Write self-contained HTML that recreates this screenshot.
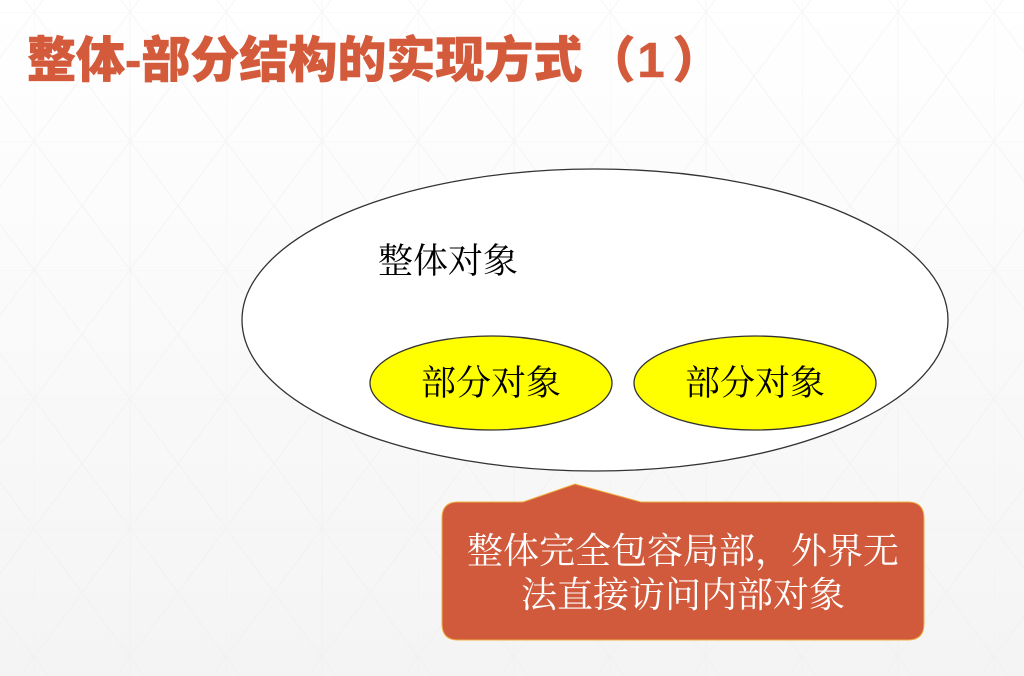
<!DOCTYPE html>
<html><head><meta charset="utf-8"><style>
html,body{margin:0;padding:0;width:1024px;height:676px;overflow:hidden;background:#fff;}
</style></head><body>
<svg width="1024" height="676" viewBox="0 0 1024 676" xmlns="http://www.w3.org/2000/svg">
<defs>
<linearGradient id="bg" x1="0" y1="0" x2="0" y2="1"><stop offset="0" stop-color="#ffffff"/><stop offset="1" stop-color="#f4f4f4"/></linearGradient>
<pattern id="grid" width="192" height="129" patternUnits="userSpaceOnUse" x="34" y="12">
<path d="M0 0H192M0 0V129M96 0V129M0 0L96 129M96 0L0 129M96 0L192 129M192 0L96 129" stroke="#ececec" stroke-width="1" fill="none"/>
</pattern>
</defs>
<rect width="1024" height="676" fill="url(#bg)"/>
<rect width="1024" height="676" fill="url(#grid)" opacity="0.5"/>
<text x="27" y="77" font-family="'Liberation Sans','Noto Sans CJK SC',sans-serif" font-weight="900" font-size="49" fill="#D35B3C" stroke="#D35B3C" stroke-width="0.6">整体-部分结构的实现方式<tspan dx="4">（</tspan><tspan dx="2">1</tspan><tspan dx="8">）</tspan></text>
<ellipse cx="595" cy="320" rx="353" ry="151" fill="#fff" stroke="#333" stroke-width="1.3"/>
<text x="378" y="273" font-family="'Noto Serif CJK SC',serif" font-size="35" fill="#000">整体对象</text>
<ellipse cx="491" cy="383" rx="121" ry="47" fill="#FFFF00" stroke="#333" stroke-width="1.3"/>
<ellipse cx="755" cy="383" rx="121" ry="47" fill="#FFFF00" stroke="#333" stroke-width="1.3"/>
<text x="491" y="395" text-anchor="middle" font-family="'Noto Serif CJK SC',serif" font-size="35" fill="#000">部分对象</text>
<text x="755" y="395" text-anchor="middle" font-family="'Noto Serif CJK SC',serif" font-size="35" fill="#000">部分对象</text>
<path d="M458 502H523L575 484L641 502H908Q924 502 924 518V624Q924 640 908 640H458Q442 640 442 624V518Q442 502 458 502Z" fill="#D15A3D" stroke="#F0B040" stroke-width="1"/>
<text x="683" y="563" text-anchor="middle" font-family="'Noto Serif CJK SC',serif" font-size="36" fill="#fff">整体完全包容局部，外界无</text>
<text x="683" y="607" text-anchor="middle" font-family="'Noto Serif CJK SC',serif" font-size="36" fill="#fff">法直接访问内部对象</text>
</svg>
</body></html>
